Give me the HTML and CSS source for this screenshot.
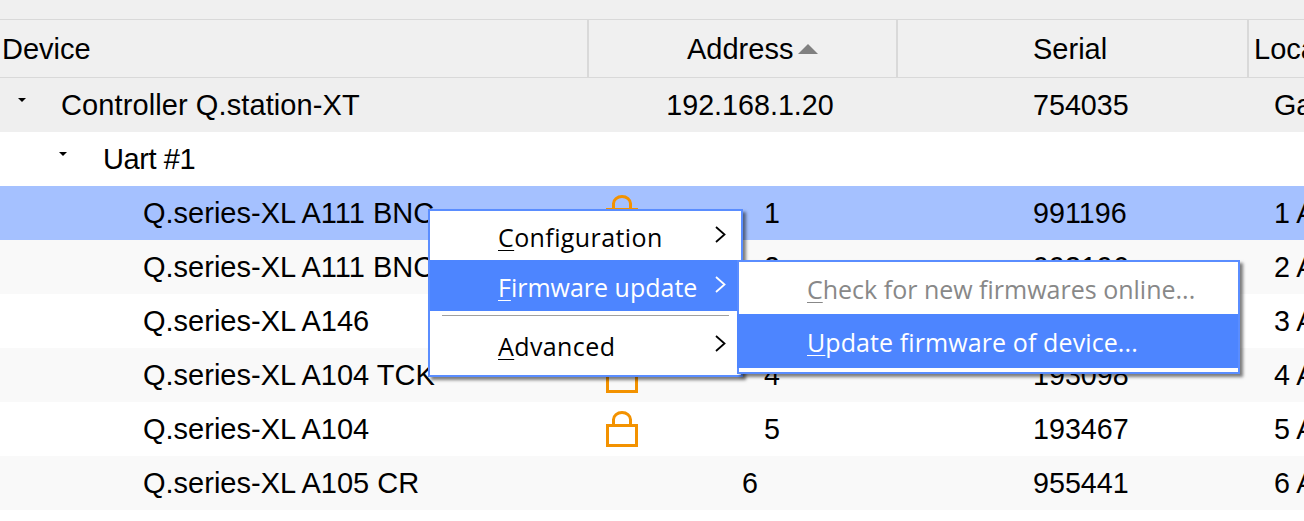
FILE: index.html
```html
<!DOCTYPE html>
<html lang="en">
<head>
<meta charset="utf-8">
<title>Devices</title>
<link rel="stylesheet" href="styles.css">
</head>
<body>
<div class="app">
  <div class="topbar"></div>
  <div class="header">
    <div class="hcell device">Device</div>
    <div class="hcell address">Address<span class="sort"></span></div>
    <div class="hcell serial">Serial</div>
    <div class="hcell location">Location</div>
  </div>
  <div class="row controller">
    <div class="cell name lvl0"><span class="caret"></span>Controller Q.station-XT</div>
    <div class="cell addr">192.168.1.20</div>
    <div class="cell ser">754035</div>
    <div class="cell loc">Garage</div>
  </div>
  <div class="row plain">
    <div class="cell name lvl1"><span class="caret"></span>Uart #1</div>
    <div class="cell addr"></div>
    <div class="cell ser"></div>
    <div class="cell loc"></div>
  </div>
  <div class="row selected">
    <div class="cell name lvl2">Q.series-XL A111 BNC</div>
    <div class="cell addr locked"><svg class="lock" viewBox="0 0 32 36"><path d="M1.500 14.500h29v20h-29z M7.500 14.500v-6a8.500 7 0 0 1 17 0v6"/></svg><span>1</span></div>
    <div class="cell ser">991196</div>
    <div class="cell loc">1 Attic</div>
  </div>
  <div class="row alt">
    <div class="cell name lvl2">Q.series-XL A111 BNC</div>
    <div class="cell addr locked"><svg class="lock" viewBox="0 0 32 36"><path d="M1.500 14.500h29v20h-29z M7.500 14.500v-6a8.500 7 0 0 1 17 0v6"/></svg><span>2</span></div>
    <div class="cell ser">993196</div>
    <div class="cell loc">2 Attic</div>
  </div>
  <div class="row plain">
    <div class="cell name lvl2">Q.series-XL A146</div>
    <div class="cell addr locked"><svg class="lock" viewBox="0 0 32 36"><path d="M1.500 14.500h29v20h-29z M7.500 14.500v-6a8.500 7 0 0 1 17 0v6"/></svg><span>3</span></div>
    <div class="cell ser">193096</div>
    <div class="cell loc">3 Attic</div>
  </div>
  <div class="row alt">
    <div class="cell name lvl2">Q.series-XL A104 TCK</div>
    <div class="cell addr locked"><svg class="lock" viewBox="0 0 32 36"><path d="M1.500 14.500h29v20h-29z M7.500 14.500v-6a8.500 7 0 0 1 17 0v6"/></svg><span>4</span></div>
    <div class="cell ser">193098</div>
    <div class="cell loc">4 Attic</div>
  </div>
  <div class="row plain">
    <div class="cell name lvl2">Q.series-XL A104</div>
    <div class="cell addr locked"><svg class="lock" viewBox="0 0 32 36"><path d="M1.500 14.500h29v20h-29z M7.500 14.500v-6a8.500 7 0 0 1 17 0v6"/></svg><span>5</span></div>
    <div class="cell ser">193467</div>
    <div class="cell loc">5 Attic</div>
  </div>
  <div class="row alt">
    <div class="cell name lvl2">Q.series-XL A105 CR</div>
    <div class="cell addr">6</div>
    <div class="cell ser">955441</div>
    <div class="cell loc">6 Attic</div>
  </div>
</div>

<div class="menu main-menu">
  <div class="item first"><span class="roomy"><u>C</u>onfiguration</span><svg class="chev" viewBox="0 0 11 17"><path d="M1 1l8.500 7.500L1 16"/></svg></div>
  <div class="item active"><span><u>F</u>irmware update</span><svg class="chev" viewBox="0 0 11 17"><path d="M1 1l8.500 7.500L1 16"/></svg></div>
  <div class="sep"></div>
  <div class="item last"><span class="roomy"><u>A</u>dvanced</span><svg class="chev" viewBox="0 0 11 17"><path d="M1 1l8.500 7.500L1 16"/></svg></div>
</div>

<div class="menu sub-menu">
  <div class="subitem disabled"><span><u>C</u>heck for new firmwares online...</span></div>
  <div class="subitem active"><span class="slight"><u>U</u>pdate firmware of device...</span></div>
</div>
</body>
</html>
```
FILE: styles.css
```css
html, body {
  margin: 0;
  padding: 0;
  height: 100%;
  background: #fff;
  overflow: hidden;
}
.app {
  width: 1304px;
  overflow: hidden;
  font-family: "Liberation Sans", Arial, sans-serif;
  font-size: 29px;
  color: #000;
}
.topbar {
  height: 19px;
  background: #f0f0f0;
}
.header, .row {
  display: grid;
  grid-template-columns: 589px 309px 351px 400px;
  width: 1649px;
}
.header {
  height: 59px;
  box-sizing: border-box;
  background: #f0f0f0;
  border-top: 1px solid #d9d9d9;
  border-bottom: 1px solid #d9d9d9;
}
.hcell {
  display: flex;
  align-items: center;
  box-sizing: border-box;
  border-right: 2px solid #d9d9d9;
  white-space: nowrap;
  padding-top: 2px;
}
.hcell.device { padding-left: 2px; }
.hcell.address { padding-left: 98px; }
.hcell.serial { padding-left: 135px; }
.hcell.location { padding-left: 5px; border-right: 0; }
.sort {
  width: 0;
  height: 0;
  margin-left: 5px;
  margin-bottom: 2px;
  border-left: 10px solid transparent;
  border-right: 10px solid transparent;
  border-bottom: 10px solid #808080;
}
.row {
  height: 54px;
  align-items: center;
}
.controller { background: #efefef; }
.plain { background: #fff; }
.alt { background: #f9f9f9; }
.selected { background: #a5c1ff; }
.cell {
  white-space: nowrap;
  box-sizing: border-box;
  min-width: 0;
}
.name { position: relative; }
.lvl0 { padding-left: 61px; letter-spacing: 0.1px; }
.lvl1 { padding-left: 103px; letter-spacing: -0.4px; }
.lvl2 { padding-left: 143px; }
.caret {
  position: absolute;
  top: 9px;
  width: 0;
  height: 0;
  border-left: 4.500px solid transparent;
  border-right: 4.500px solid transparent;
  border-top: 4.500px solid #000;
}
.lvl0 .caret { left: 18px; }
.lvl1 .caret { left: 59px; }
.addr, .ser, .loc { font-size: 28.700px; }
.addr {
  text-align: center;
  padding-left: 13px;
}
.addr.locked {
  display: flex;
  align-items: center;
  padding-left: 17px;
}
.addr.locked span { margin-left: 126px; }
.lock {
  display: block;
  width: 32px;
  height: 36px;
  fill: none;
  stroke: #f39200;
  stroke-width: 3;
}
.ser { padding-left: 135px; }
.loc { padding-left: 25px; }

.menu {
  position: absolute;
  box-sizing: border-box;
  background: #fff;
  border: 2px solid #5a8dff;
  box-shadow: 3px 3px 3px rgba(0, 0, 0, 0.5);
  font-family: "Open Sans", "Noto Sans", sans-serif;
  font-size: 25px;
  line-height: 34px;
  color: #000;
  white-space: nowrap;
}
.main-menu {
  left: 428px;
  top: 209px;
  width: 315px;
  height: 168px;
  padding-bottom: 4px;
  display: flex;
  flex-direction: column;
}
.sub-menu {
  left: 737px;
  top: 260px;
  width: 503px;
  height: 114px;
  display: flex;
  flex-direction: column;
}
.item {
  display: flex;
  align-items: center;
  justify-content: space-between;
  padding: 2px 15px 0 68px;
  box-sizing: border-box;
}
.item.first { height: 49px; }
.item.active { height: 51px; margin-right: 4px; padding-right: 11px; }
.item.last { flex: 1; }
.sep {
  height: 1px;
  margin: 4px 12px 2px;
  background: #a0a0a0;
}
.active {
  background: #4d85ff;
  color: #fff;
}
.chev {
  display: block;
  width: 11px;
  height: 17px;
  margin-top: -4px;
  fill: none;
  stroke: currentColor;
  stroke-width: 1.800;
}
.subitem {
  display: flex;
  align-items: center;
  padding: 2px 0 0 68px;
  box-sizing: border-box;
}
.subitem.disabled { height: 52px; color: #888; }
.subitem.active { height: 54px; margin-left: -2px; padding-left: 70px; }
.roomy { letter-spacing: 0.4px; }
.slight { letter-spacing: 0.1px; }
u { text-underline-offset: 3px; text-decoration-thickness: 1px; }
```
